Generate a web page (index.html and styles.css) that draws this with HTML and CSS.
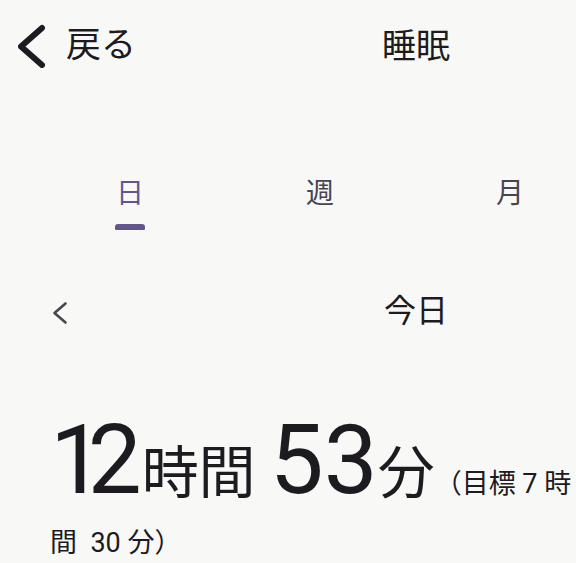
FILE: index.html
```html
<!DOCTYPE html>
<html lang="ja">
<head>
<meta charset="utf-8">
<title>睡眠</title>
<link rel="stylesheet" href="styles.css">
</head>
<body>
<header class="topbar">
  <div class="back">
    <svg class="back-icon" viewBox="0 0 28 44" width="28" height="44" aria-hidden="true">
      <polyline points="24,4 3,22.5 24,41" fill="none" stroke="currentColor" stroke-width="6" stroke-linecap="round" stroke-linejoin="round"/>
    </svg>
    <span class="back-label">戻る</span>
  </div>
  <h1 class="title">睡眠</h1>
</header>

<nav class="tabs">
  <div class="tab active"><span class="tab-label">日</span><span class="indicator"></span></div>
  <div class="tab"><span class="tab-label">週</span></div>
  <div class="tab"><span class="tab-label">月</span></div>
</nav>

<div class="datebar">
  <div class="prev">
    <svg class="prev-icon" viewBox="0 0 16 26" width="16" height="26" aria-hidden="true">
      <polyline points="13.5,3.5 2.5,13 13.5,22.5" fill="none" stroke="currentColor" stroke-width="2.6" stroke-linecap="round" stroke-linejoin="round"/>
    </svg>
  </div>
  <div class="date">今日</div>
</div>

<p class="summary"><span class="num"><span class="one">1</span>2</span><span class="unit">時間 </span><span class="num">53</span><span class="unit">分</span><span class="goal">（目標 7 時間&nbsp; 30 分）</span></p>
</body>
</html>
```
FILE: styles.css
```css
html, body {
  margin: 0;
  padding: 0;
}
body {
  width: 576px;
  height: 563px;
  overflow: hidden;
  background: #f8f9f7;
  color: #1d1b20;
  font-family: Roboto, "Noto Sans CJK JP", sans-serif;
}

.topbar {
  display: grid;
  grid-template-columns: 256px 1fr;
  align-items: center;
  height: 92px;
}
.back {
  display: flex;
  align-items: center;
  gap: 20px;
  padding-left: 18px;
  color: #1d1b20;
}
.back-icon {
  display: block;
}
.back-label {
  font-size: 35px;
  line-height: 48px;
}
.title {
  margin: 0;
  text-align: center;
  font-size: 34px;
  font-weight: 400;
  line-height: 48px;
}

.tabs {
  display: flex;
  margin-top: 82px;
  margin-left: 35px;
}
.tab {
  flex: 0 0 190px;
  display: flex;
  flex-direction: column;
  align-items: center;
  color: #49454f;
}
.tab-label {
  font-size: 28px;
  line-height: 40px;
}
.tab.active {
  color: #65558f;
}
.indicator {
  width: 30px;
  height: 6px;
  margin-top: 10px;
  background: #65558f;
  border-radius: 3px 3px 1px 1px;
}

.datebar {
  display: grid;
  grid-template-columns: 256px 1fr;
  align-items: center;
  height: 50px;
  margin-top: 56px;
}
.prev {
  padding-left: 52px;
  padding-top: 4px;
  color: #49454f;
}
.prev-icon {
  display: block;
}
.date {
  text-align: center;
  font-size: 32px;
  line-height: 46px;
}

.summary {
  margin: 95px 0 0;
  padding-left: 50px;
  text-indent: 4px;
  font-size: 27px;
  line-height: 59px;
  color: #1d1b20;
}
.num {
  font-size: 96px;
  font-variant-numeric: proportional-nums;
}
.one {
  margin-right: -8px;
}
.unit {
  font-size: 57px;
}
.goal {
  font-size: 27px;
}
```
